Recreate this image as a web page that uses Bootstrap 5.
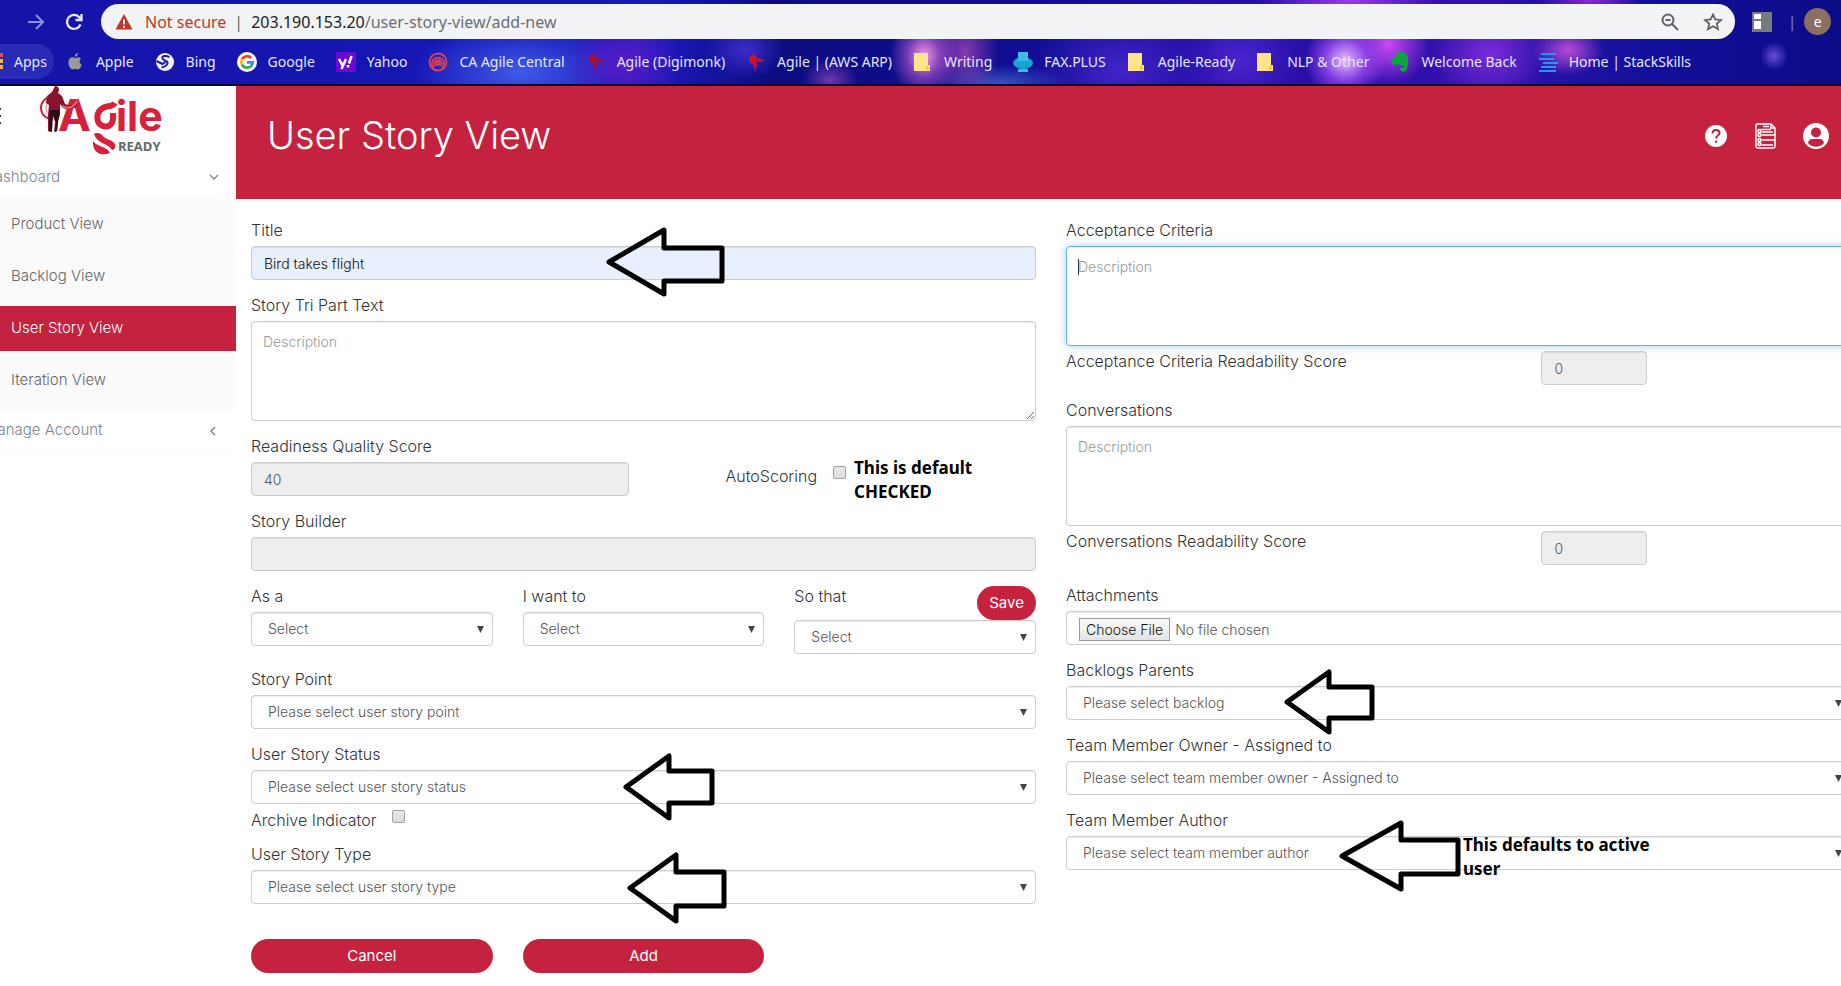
<!DOCTYPE html>
<html lang="en">
<head>
<meta charset="utf-8">
<meta name="viewport" content="width=device-width, initial-scale=1">
<title>User Story View</title>
<link href="https://cdn.jsdelivr.net/npm/bootstrap@5.3.0/dist/css/bootstrap.min.css" rel="stylesheet">
<style>
:root { --brand: #c52240; }
body { font-family: Inter, "Open Sans", sans-serif; font-size: 15px; font-weight: 300; color: #333; background: #fff; overflow-x: hidden; }
svg { flex: none; }

/* browser frame */
.browser {
  font-family: "Noto Sans", "Open Sans", sans-serif; font-weight: 400; color: #e6e6fa; height: 86px; border-bottom: 2px solid #0a0826; padding-top: 4px; overflow: hidden;
  background:
    radial-gradient(ellipse 34px 42px at 924px 56px, #f29be6, #b858d099 50%, transparent),
    radial-gradient(ellipse 34px 46px at 965px 52px, #b04bb8bb, transparent),
    radial-gradient(ellipse 28px 20px at 830px 80px, #a04cc0aa, transparent),
    radial-gradient(ellipse 40px 40px at 1345px 60px, #e6b8ff, #9a48f0bb 55%, transparent),
    radial-gradient(ellipse 42px 42px at 1388px 44px, #cc48f4, transparent),
    radial-gradient(ellipse 90px 40px at 1350px 0, #9a3cf0, transparent),
    radial-gradient(ellipse 36px 26px at 1568px 50px, #b84ad8, transparent),
    radial-gradient(ellipse 60px 50px at 1490px 54px, #7a2cd8, transparent),
    radial-gradient(ellipse 50px 20px at 1590px 0, #8a2cd0, transparent),
    radial-gradient(ellipse 14px 14px at 1774px 56px, #6a4cd8, transparent),
    radial-gradient(ellipse 60px 50px at 625px 62px, #5a1cc8, transparent),
    radial-gradient(ellipse 110px 50px at 520px 72px, #3f5ae8, transparent),
    radial-gradient(ellipse 40px 30px at 745px 50px, #3c2cc8, transparent),
    radial-gradient(ellipse 70px 20px at 1000px 84px, #4a78d8aa, transparent),
    radial-gradient(ellipse 60px 50px at 1240px 60px, #4c24d0, transparent),
    radial-gradient(ellipse 90px 60px at 1120px 70px, #4224c8, transparent),
    linear-gradient(90deg, #1414a8 0, #1616b4 25%, #1a18b8 36%, #0c0c80 42%, #120e96 58%, #260fa8 66%, #3210ac 80%, #12109a 90%, #0c0c88 100%);
}
.omnibox { height: 35px; border-radius: 18px; background: #f1f3f4; font-size: 16px; color: #6b6f74; padding: 0 12px 0 14px; }
.omnibox .insecure { color: #c5352b; }
.omnibox-host { color: #202124; }
.tool-nav { width: 101px; padding-right: 18px; gap: 20px; }
.tool-end { width: 106px; padding-left: 17px; }
.avatar { width: 27px; height: 27px; background: #8d6e63; color: #fff; font-size: 14px; }
.bookmarks { height: 45px; font-size: 14px; gap: 21px; white-space: nowrap; }
.bookmarks a { color: inherit; text-decoration: none; gap: 11px; }
.bookmarks .apps { background: #2a2ab8; border-radius: 0 18px 18px 0; height: 35px; padding-right: 7px; margin-right: -10px; }

/* sidebar */
.side { width: 236px; overflow: hidden; }
.side a { color: #7c858e; text-decoration: none; font-size: 15px; }
.side-inner { margin-left: -28px; }
.side-logo { height: 69px; padding-left: 28px; }
.side-head { height: 44px; padding: 0 11px 0 12px; }
.side-sub { background: #fafafa; padding: 3px 0 6px; gap: 7px; }
.side-sub a { height: 45px; padding-left: 39px; color: #666; }
.side-sub a.current { background: var(--brand); color: #fff; }

/* page */
.page { margin-right: -25px; }
.page-head { background: var(--brand); height: 113px; padding: 0 37px 14px 31px; color: #fff; }
.page-head h1 { font-size: 38px; font-weight: 300; margin: 0; }
.page-head a { color: #fff; }
.wide-gutter { --bs-gutter-x: 30px; }
.page-body { padding: 21px 15px 0; }
.field { margin-bottom: 15px; position: relative; }
.field label, .tick label, .score label { font-size: 16px; line-height: 21px; }
.field > label { display: block; margin-bottom: 5px; }
.box { height: 34px; font-size: 14px; line-height: 20px; font-weight: 300; padding: 6px 12px; border: 1px solid #ccc; border-radius: 4px; color: #555; box-shadow: inset 0 1px 1px #00000013; }
.box::placeholder { color: #999; }
.box:disabled { background-color: #eee; }
textarea.box { height: 100px; padding: 10px 11px; display: block; }
.box.autofilled { background: #e8f0fe; color: #111; }
.box.active { border-color: #66afe9; box-shadow: inset 0 1px 1px #00000013, 0 0 8px #66afe999; background: linear-gradient(#333, #333) 11px 12px / 1px 16px no-repeat #fff; caret-color: transparent; }
select.box { padding-left: 16px; background-position: right 7px center; background-size: 9px 9px; background-image: url("data:image/svg+xml,%3Csvg xmlns='http://www.w3.org/2000/svg' viewBox='0 0 9 9'%3E%3Cpath d='M1 1h7L4.500 8z' fill='%23444'/%3E%3C/svg%3E"); }
input[type=file].box { padding: 6px 12px 4px; }
input[type=file].box::file-selector-button { margin: 0 5px 0 0; padding: 1px 6px; height: 23px; border: 1px solid #999; background: linear-gradient(#fafafa, #e4e4e4); color: #111; font-size: 14px; line-height: 19px; font-weight: 300; }
.tick input { appearance: none; width: 13px; height: 13px; border: 1px solid #a0a0a0; border-radius: 2px; background: linear-gradient(#e8e8e8, #dcdcdc); margin: 0; }
.auto-score { padding: 20px 0 0 67px; }
.btn-brand, .btn-brand:hover { background: var(--brand); color: #fff; border: 0; border-radius: 17px; height: 34px; font-size: 15px; font-weight: 400; padding: 0 12px; }
.score { margin-bottom: 15px; padding-top: 5px; }
.score-last { margin-bottom: 20px; }
.archive { height: 25px; margin: -15px 0 15px; }
.actions { padding: 20px 0 13px; }

/* notes drawn over the form */
.pointer { position: absolute; fill: none; stroke: #000; stroke-width: 5; stroke-linejoin: round; pointer-events: none; }
.remark { font-family: "Noto Sans", "Open Sans", sans-serif; font-weight: 700; font-size: 17px; line-height: 24px; color: #000; margin: 0; }
.remark-over { position: absolute; }
</style>
</head>
<body>
<header class="browser">
  <div class="d-flex align-items-center">
    <div class="tool-nav d-flex align-items-center justify-content-end">
      <svg width="18" height="18" viewBox="0 0 18 18" fill="none" stroke="#8f90dc" stroke-width="2"><path d="M1 9h15M9 2l7 7-7 7"/></svg>
      <svg width="18" height="18" viewBox="0 0 18 18" fill="none" stroke="#e8e8fa" stroke-width="2.300"><path d="M15.500 11.500A7 7 0 1 1 14 4l2 2"/><path d="M16.500 1v6h-6"/></svg>
    </div>
    <div class="omnibox d-flex align-items-center flex-grow-1">
      <svg width="18" height="16" viewBox="0 0 18 16"><path d="M9 0l8.500 15.500H.5z" fill="#c5352b"/><path d="M9 5.500v5M9 12v2" stroke="#fff" stroke-width="1.800"/></svg>
      <span class="insecure ms-2 ps-1">Not secure</span>
      <span class="mx-2">|</span>
      <span class="flex-grow-1"><span class="omnibox-host">203.190.153.20</span>/user-story-view/add-new</span>
      <svg class="me-4" width="18" height="18" viewBox="0 0 18 18" fill="none" stroke="#5f6368" stroke-width="2"><circle cx="7" cy="7" r="5.500"/><path d="M11 11l6 6M4.500 7h5"/></svg>
      <svg width="20" height="18" viewBox="0 0 20 18" fill="none" stroke="#5f6368" stroke-width="1.800"><path d="M10 1.500l2.300 5 5.700.6-4.200 3.600 1.200 5.500-5-2.900-5 2.900 1.200-5.500L2 7.100l5.700-.6z"/></svg>
    </div>
    <div class="tool-end d-flex align-items-center">
      <svg width="20" height="20" viewBox="0 0 20 20"><path d="M0 0h20v20H0z" fill="#777b80"/><path d="M2 2h7v5H2zM2 9h7v8H2z" fill="#fff"/></svg>
      <span class="ms-3 me-2 opacity-50">|</span>
      <span class="avatar rounded-circle d-flex align-items-center justify-content-center">e</span>
    </div>
  </div>
  <nav class="bookmarks d-flex align-items-center" aria-label="Bookmarks">
    <a class="apps d-flex align-items-center" href="#"><svg width="3" height="17" viewBox="0 0 3 17"><path d="M0 0h3v4H0z" fill="#e5533d"/><path d="M0 6h3v4H0zM0 12h3v4H0z" fill="#f0b93a"/></svg>Apps</a>
    <a class="d-flex align-items-center" href="#"><svg width="20" height="20" viewBox="0 0 20 20" fill="#999"><path d="M13 1c.2 2-1.500 3.800-3.300 3.800C9.500 3 11.200 1.200 13 1zM10 6c1 0 1.800-.8 3.300-.8 1 0 2.200.6 2.900 1.600-2.500 1.400-2 5 .6 6-.8 2.200-2.200 4.700-3.800 4.700-1 0-1.500-.6-2.800-.6-1.200 0-1.800.6-2.800.6-1.800 0-4-4-4-7.300 0-3 1.900-4.900 4-4.900C8.500 5.300 9.200 6 10 6z"/></svg>Apple</a>
    <a class="d-flex align-items-center" href="#"><svg width="20" height="20" viewBox="0 0 20 20"><circle cx="10" cy="10" r="9" fill="#f4f4fc"/><path d="M14.500 5c-4-2-8-1-7 1.500s6 2 5 5-4 3.500-6 4M1.500 9l6 3 3-2" fill="none" stroke="#1a1aa8" stroke-width="2"/></svg>Bing</a>
    <a class="d-flex align-items-center" href="#"><svg width="20" height="20" viewBox="0 0 20 20" fill="none" stroke-width="2.800"><circle cx="10" cy="10" r="10" fill="#fff"/><path d="M14.200 6A5.800 5.800 0 0 0 5 7.200" stroke="#ea4335"/><path d="M5 7.200a6 6 0 0 0 0 5.600" stroke="#fbbc05"/><path d="M5 12.800a5.800 5.800 0 0 0 8.800 1.500" stroke="#34a853"/><path d="M13.800 14.300a5.500 5.500 0 0 0 2-4H10" stroke="#4285f4"/></svg>Google</a>
    <a class="d-flex align-items-center" href="#"><svg width="20" height="20" viewBox="0 0 20 20"><path d="M0 0h20v20H0z" fill="#6a0ad0"/><path d="M3 7l3.500 6.500M10 7l-4.500 10M15.500 4L13 11.500M12 13v2.500" stroke="#fff" stroke-width="2.500" fill="none"/></svg>Yahoo</a>
    <a class="d-flex align-items-center" href="#"><svg width="20" height="20" viewBox="0 0 20 20" fill="none" stroke="#e04050" stroke-width="1.800"><circle cx="10" cy="10" r="8.500"/><path d="M6 16a6 6 0 1 1 8 0M7.500 14a3.500 3.500 0 1 1 5 0"/><circle cx="10" cy="11.500" r="1.500"/></svg>CA Agile Central</a>
    <a class="d-flex align-items-center" href="#"><svg width="20" height="20" viewBox="0 0 20 20"><path d="M8 0l2 4 3 3 6 1-5 2-4-1 1 4-2 7-1-6-5-5 1-5 3-1z" fill="#a01438"/></svg>Agile (Digimonk)</a>
    <a class="d-flex align-items-center" href="#"><svg width="20" height="20" viewBox="0 0 20 20"><path d="M8 0l2 4 3 3 6 1-5 2-4-1 1 4-2 7-1-6-5-5 1-5 3-1z" fill="#c01438"/></svg>Agile | (AWS ARP)</a>
    <a class="d-flex align-items-center" href="#"><svg width="20" height="20" viewBox="0 0 20 20"><path d="M1 1h14v12h2v6H1z" fill="#ffe48a"/><path d="M13 14h3v4h-3z" fill="#f3c84b"/></svg>Writing</a>
    <a class="d-flex align-items-center" href="#"><svg width="20" height="20" viewBox="0 0 20 20"><ellipse cx="10" cy="11" rx="10" ry="6" fill="#14a4d4"/><path d="M5 0h10v9H5zM5 17h10v3H5z" fill="#3dbbe6"/></svg>FAX.PLUS</a>
    <a class="d-flex align-items-center" href="#"><svg width="20" height="20" viewBox="0 0 20 20"><path d="M1 1h14v12h2v6H1z" fill="#ffe48a"/><path d="M13 14h3v4h-3z" fill="#f3c84b"/></svg>Agile-Ready</a>
    <a class="d-flex align-items-center" href="#"><svg width="20" height="20" viewBox="0 0 20 20"><path d="M1 1h14v12h2v6H1z" fill="#ffe48a"/><path d="M13 14h3v4h-3z" fill="#f3c84b"/></svg>NLP &amp; Other</a>
    <a class="d-flex align-items-center" href="#"><svg width="20" height="20" viewBox="0 0 20 20"><path d="M7 0h5l5 3c2 5 1 10 0 14-1 4-7 3-7 0 0-2 3-3 4-1v-3c-2 1-4 1-5-1-2 2-7 1-8-2-1-2 0-4 1-5h4z" fill="#0aa53c"/></svg>Welcome Back</a>
    <a class="d-flex align-items-center" href="#"><svg width="20" height="20" viewBox="0 0 20 20" stroke="#2196f3" stroke-width="2"><path d="M3 2h15M1 7h15M5 11h15M3 15h15M1 19h17"/></svg>Home | StackSkills</a>
  </nav>
</header>

<div class="d-flex">
  <aside class="side flex-shrink-0">
    <div class="side-inner">
      <div class="side-logo">
        <svg width="180" height="69" viewBox="0 0 180 69" role="img" aria-label="Agile Ready">
          <path d="M0 22h1v2H0zM0 29h1v2H0zM0 36h1v2H0z" fill="#333"/>
          <path d="M51 11a11 11 0 1 0 2 22" fill="none" stroke="#d8203c" stroke-width="2"/>
          <path d="M50 15a8 8 0 0 0 0 14" fill="none" stroke="#e88090" stroke-width="1"/>
          <text x="58" y="45" font-size="44" fill="#d8203c" font-family="Inter, sans-serif" font-weight="700">A</text>
          <text x="116" y="45" font-size="41" fill="#d8203c" font-family="Inter, sans-serif" font-weight="700">ile</text>
          <path d="M55 0q4 0 4 4l-1 3 4 3 3 8q8 3 13-3l-2 6q-6 4-13 1l-3-4v8l-2 8-1 11-3 1 1-10-3-8-1 18-3-1v-17l1-9-3-2 1-7 5-4z" fill="#8a1430"/>
          <path d="M50 24h9l1 4-2 8-1 9-2 1 1-10-3-8-1 18-3-1v-13z" fill="#2a0a14"/>
          <path d="M62 20q10 5 15-5" fill="none" stroke="#e46a78" stroke-width="2"/>
          <path d="M115 17c-3 5-8 2-12 5-8 4-7 16 0 18 6 2 10-2 10-8v-5" fill="none" stroke="#d8203c" stroke-width="6"/>
          <path d="M94 48c2-2 7-1 8 1 3 5 10 4 13 9 1 4-1 6-3 6-4-7-15-6-18-16zM93 55c4 6 14 5 17 12-9 4-18-1-17-12z" fill="#d8203c"/>
          <text x="118" y="65" font-family="'Liberation Sans Narrow', 'Open Sans', sans-serif" font-weight="700" font-size="13" fill="#636868">READY</text>
        </svg>
      </div>
      <a class="side-head d-flex align-items-center justify-content-between" href="#">Dashboard
        <svg width="22" height="10" viewBox="0 0 22 10" fill="none" stroke="#808890" stroke-width="1.500"><path d="M7 3l4 4 4-4"/></svg></a>
      <div class="side-sub d-flex flex-column">
        <a class="d-flex align-items-center" href="#">Product View</a>
        <a class="d-flex align-items-center" href="#">Backlog View</a>
        <a class="d-flex align-items-center current" href="#" aria-current="page">User Story View</a>
        <a class="d-flex align-items-center" href="#">Iteration View</a>
      </div>
      <a class="side-head d-flex align-items-center justify-content-between border-bottom border-light" href="#">Manage Account
        <svg width="22" height="10" viewBox="0 0 22 10" fill="none" stroke="#808890" stroke-width="1.500"><path d="M12 1L8 5l4 4"/></svg></a>
    </div>
  </aside>

  <main class="page flex-grow-1">
    <div class="page-head d-flex align-items-center justify-content-between">
      <h1>User Story View</h1>
      <div class="d-flex align-items-center gap-4">
        <a class="d-flex" href="#" aria-label="Help"><svg width="26" height="26" viewBox="0 0 26 26"><circle cx="13" cy="13" r="11" fill="#fff"/><path d="M9.500 10.500c0-5 7-4.500 7-.5 0 2.600-3.400 2.600-3.400 5.500M13.100 17.500v2.300" fill="none" stroke="#c52240" stroke-width="2"/></svg></a>
        <a class="d-flex" href="#" aria-label="Stories"><svg width="26" height="28" viewBox="0 0 26 28" fill="none" stroke="#fff" stroke-width="1.500"><path d="M4 2h14l4 4v18q0 2-2 2H5q-2 0-2-2V3zM18 2v4h4M10 4.500h6M8 7.500h10M9 13h13M9 18h13M9 23h11M9 10h11"/><circle cx="6.500" cy="9" r="1.500"/><circle cx="6.500" cy="13" r="1.500"/><circle cx="6.500" cy="18" r="1.500"/><circle cx="6.500" cy="22" r="1.500"/></svg></a>
        <a class="d-flex" href="#" aria-label="Account"><svg width="26" height="26" viewBox="0 0 26 26"><circle cx="13" cy="13" r="13" fill="#fff"/><circle cx="13" cy="9.500" r="5" fill="#c52240"/><path d="M5 20c1-5 4-4 8-4s7-1 8 4c-4 5-12 5-16 0z" fill="#c52240"/></svg></a>
      </div>
    </div>

    <form class="page-body">
      <div class="row wide-gutter">
        <div class="col-6">
          <div class="field">
            <label for="title">Title</label>
            <input id="title" class="form-control box autofilled" type="text" value="Bird takes flight">
            <svg class="pointer" style="left:355px;top:6px" width="122" height="72" viewBox="0 0 122 72"><path d="M3 36L58 4v18h58v33H58v13z"/></svg>
          </div>
          <div class="field">
            <label for="tri">Story Tri Part Text</label>
            <textarea id="tri" class="form-control box" placeholder="Description"></textarea>
          </div>
          <div class="row wide-gutter">
            <div class="col-6 field">
              <label for="quality">Readiness Quality Score</label>
              <input id="quality" class="form-control box" type="text" value="40" disabled>
            </div>
            <div class="col-6">
              <div class="tick auto-score d-flex align-items-center">
                <label class="mb-2" for="auto">AutoScoring</label>
                <input id="auto" class="ms-3 me-2 mb-3" type="checkbox">
                <p class="remark">This is default<br>CHECKED</p>
              </div>
            </div>
          </div>
          <div class="field">
            <label for="builder">Story Builder</label>
            <input id="builder" class="form-control box" type="text" disabled>
          </div>
          <div class="row wide-gutter">
            <div class="col-4 field"><label for="asa">As a</label><select id="asa" class="form-select box"><option>Select</option></select></div>
            <div class="col-4 field"><label for="want">I want to</label><select id="want" class="form-select box"><option>Select</option></select></div>
            <div class="col-4 field">
              <div class="d-flex justify-content-between"><label for="sothat">So that</label><button class="btn btn-brand" type="button">Save</button></div>
              <select id="sothat" class="form-select box"><option>Select</option></select>
            </div>
          </div>
          <div class="field"><label for="point">Story Point</label><select id="point" class="form-select box"><option>Please select user story point</option></select></div>
          <div class="field"><label for="status">User Story Status</label><select id="status" class="form-select box"><option>Please select user story status</option></select>
            <svg class="pointer" style="left:371px;top:8px" width="96" height="70" viewBox="0 0 96 70"><path d="M4 35L47 4v15h43v32H47v15z"/></svg>
          </div>
          <div class="tick archive d-flex align-items-center">
            <label for="archive" class="mt-2 me-3">Archive Indicator</label><input id="archive" type="checkbox">
          </div>
          <div class="field"><label for="type">User Story Type</label><select id="type" class="form-select box"><option>Please select user story type</option></select>
            <svg class="pointer" style="left:375px;top:6px" width="104" height="76" viewBox="0 0 104 76"><path d="M4 38L50 5v17h48v34H50v15z"/></svg>
          </div>
          <div class="row wide-gutter actions">
            <div class="col-4"><button class="btn btn-brand w-100" type="button">Cancel</button></div>
            <div class="col-4"><button class="btn btn-brand w-100" type="submit">Add</button></div>
          </div>
        </div>

        <div class="col-6">
          <div class="field mb-0">
            <label for="criteria">Acceptance Criteria</label>
            <textarea id="criteria" class="form-control box active" placeholder="Description" autofocus></textarea>
          </div>
          <div class="row wide-gutter score">
            <div class="col-7"><label for="cscore">Acceptance Criteria Readability Score</label></div>
            <div class="col-2"><input id="cscore" class="form-control box" type="text" value="0" disabled></div>
          </div>
          <div class="field mb-0">
            <label for="talk">Conversations</label>
            <textarea id="talk" class="form-control box" placeholder="Description"></textarea>
          </div>
          <div class="row wide-gutter score score-last">
            <div class="col-7"><label for="tscore">Conversations Readability Score</label></div>
            <div class="col-2"><input id="tscore" class="form-control box" type="text" value="0" disabled></div>
          </div>
          <div class="field"><label for="files">Attachments</label><input id="files" class="form-control box" type="file"></div>
          <div class="field"><label for="parent">Backlogs Parents</label><select id="parent" class="form-select box"><option>Please select backlog</option></select>
            <svg class="pointer" style="left:217px;top:8px" width="94" height="68" viewBox="0 0 94 68"><path d="M4 34L46 4v15h43v31H46v14z"/></svg>
          </div>
          <div class="field"><label for="owner">Team Member Owner - Assigned to</label><select id="owner" class="form-select box"><option>Please select team member owner - Assigned to</option></select></div>
          <div class="field"><label for="author">Team Member Author</label><select id="author" class="form-select box"><option>Please select team member author</option></select>
            <svg class="pointer" style="left:272px;top:8px" width="126" height="76" viewBox="0 0 126 76"><path d="M4 38L63 5v17h57v34H63v15z"/></svg>
            <p class="remark remark-over" style="left:397px;top:23px">This defaults to active<br>user</p>
          </div>
        </div>
      </div>
    </form>
  </main>
</div>
<script src="https://cdn.jsdelivr.net/npm/bootstrap@5.3.0/dist/js/bootstrap.bundle.min.js"></script>
</body>
</html>
